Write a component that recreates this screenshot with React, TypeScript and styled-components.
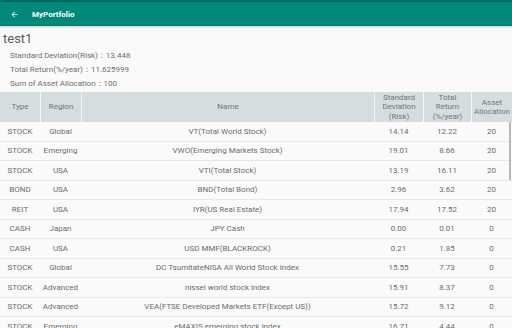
import styled, { createGlobalStyle } from 'styled-components';

const GlobalStyle = createGlobalStyle`
  html, body {
    margin: 0;
    padding: 0;
    background: #fafafa;
  }
  body {
    font-family: Roboto, "Noto Sans", sans-serif;
  }
`;

const Screen = styled.div`
  width: 512px;
  height: 328px;
  overflow: hidden;
  position: relative;
  background: #fafafa;
`;

const AppBar = styled.header`
  height: 26px;
  box-sizing: border-box;
  border-top: 2px solid #00695c;
  background: #00897b;
  display: flex;
  align-items: center;
  padding-left: 10px;
  color: #fff;
  box-shadow: 0 1px 2px rgba(0, 0, 0, 0.2);
`;

const BackButton = styled.span`
  display: flex;
  width: 9px;
  margin-right: 13px;
`;

const Title = styled.span`
  font-size: 8px;
  font-weight: 700;
`;

const Summary = styled.section`
  padding: 5px 0 1px;
`;

const PortfolioName = styled.div`
  font-size: 13px;
  line-height: 16px;
  color: #5a5a5a;
  padding-left: 3px;
  margin-bottom: 2px;
`;

const Stat = styled.div`
  font-size: 8px;
  line-height: 14px;
  color: #6e6e6e;
  padding-left: 10px;
`;

const columns = '40px 41px 1fr 49px 48px 41px';

const HeaderRow = styled.div`
  display: grid;
  grid-template-columns: ${columns};
  height: 30px;
  background: #d6dde1;
`;

const HeaderCell = styled.div<{ $first?: boolean }>`
  display: flex;
  align-items: center;
  justify-content: center;
  text-align: center;
  font-size: 8px;
  line-height: 9.5px;
  color: #747474;
  border-left: ${(p) => (p.$first ? 'none' : '1px solid #f4f6f7')};
`;

const Row = styled.div`
  display: grid;
  grid-template-columns: ${columns};
  height: 19.5px;
  box-sizing: border-box;
  border-bottom: 1px solid #e8e8e8;
`;

const Cell = styled.div`
  display: flex;
  align-items: center;
  justify-content: center;
  font-size: 8px;
  color: #6c6c6c;
  white-space: nowrap;
`;

const ScrollThumb = styled.div`
  position: absolute;
  right: 1px;
  top: 122px;
  width: 2px;
  height: 58px;
  background: #b8b8b8;
`;

const assets = [
  ['STOCK', 'Global', 'VT(Total World Stock)', '14.14', '12.22', '20'],
  ['STOCK', 'Emerging', 'VWO(Emerging Markets Stock)', '19.01', '8.66', '20'],
  ['STOCK', 'USA', 'VTI(Total Stock)', '13.19', '16.11', '20'],
  ['BOND', 'USA', 'BND(Total Bond)', '2.96', '3.62', '20'],
  ['REIT', 'USA', 'IYR(US Real Estate)', '17.94', '17.52', '20'],
  ['CASH', 'Japan', 'JPY Cash', '0.00', '0.01', '0'],
  ['CASH', 'USA', 'USD MMF(BLACKROCK)', '0.21', '1.85', '0'],
  ['STOCK', 'Global', 'DC TsumitateNISA All World Stock Index', '15.55', '7.73', '0'],
  ['STOCK', 'Advanced', 'nissei world stock index', '15.91', '8.37', '0'],
  ['STOCK', 'Advanced', 'VEA(FTSE Developed Markets ETF(Except US))', '15.72', '9.12', '0'],
  ['STOCK', 'Emerging', 'eMAXIS emerging stock index', '16.71', '4.44', '0'],
];

const App = () => {
  return (
    <Screen>
      <GlobalStyle />
      <AppBar>
        <BackButton>
          <svg width="9" height="9" viewBox="0 0 24 24">
            <path d="M20 11H7.83l5.59-5.59L12 4l-8 8 8 8 1.41-1.41L7.83 13H20v-2z" fill="#fff" />
          </svg>
        </BackButton>
        <Title>MyPortfolio</Title>
      </AppBar>
      <Summary>
        <PortfolioName>test1</PortfolioName>
        <Stat>Standard Deviation(Risk)：13.448</Stat>
        <Stat>Total Return(%/year)：11.625999</Stat>
        <Stat>Sum of Asset Allocation：100</Stat>
      </Summary>
      <HeaderRow>
        <HeaderCell $first>Type</HeaderCell>
        <HeaderCell>Region</HeaderCell>
        <HeaderCell>Name</HeaderCell>
        <HeaderCell>Standard<br />Deviation<br />(Risk)</HeaderCell>
        <HeaderCell>Total<br />Return<br />(%/year)</HeaderCell>
        <HeaderCell>Asset<br />Allocation</HeaderCell>
      </HeaderRow>
      {assets.map((a, i) => (
        <Row key={i}>
          {a.map((v, j) => (
            <Cell key={j}>{v}</Cell>
          ))}
        </Row>
      ))}
      <ScrollThumb />
    </Screen>
  );
};

export default App;
